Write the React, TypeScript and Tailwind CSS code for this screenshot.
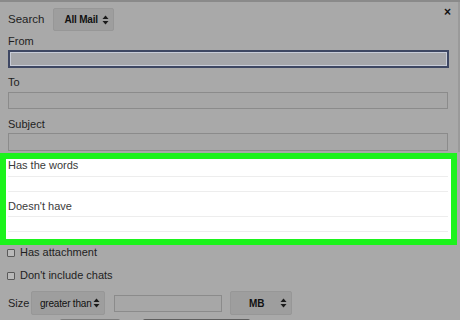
import React from "react";

function UpDown() {
  return (
    <svg width="7" height="10" viewBox="0 0 7 10" className="shrink-0">
      <path d="M3.5 0.5 L6.5 4 L0.5 4 Z" fill="#1a1a1a" />
      <path d="M3.5 9.5 L6.5 6 L0.5 6 Z" fill="#1a1a1a" />
    </svg>
  );
}

function Select({
  label,
  className,
  textClass = "font-bold",
}: {
  label: string;
  className: string;
  textClass?: string;
}) {
  return (
    <div
      className={`flex shrink-0 items-center justify-between rounded-[2px] border border-[#979797] bg-[#9e9e9e] ${className}`}
    >
      <span className={`whitespace-nowrap text-[10px] tracking-[-0.2px] text-[#111] ${textClass}`}>
        {label}
      </span>
      <UpDown />
    </div>
  );
}

export default function App() {
  return (
    <div
      className="relative h-[320px] w-[460px] overflow-hidden border-t-2 border-[#8a8a8a] bg-[#a9a9a9] text-[11px] text-[#1e1e1e]"
      style={{ fontFamily: '"Liberation Sans", Arial, sans-serif' }}
    >
      {/* close */}
      <span className="absolute right-[9px] top-[4px] text-[12px] font-bold leading-none text-[#111]">
        ×
      </span>
      <div className="absolute right-0 top-0 h-[150px] w-[2px] bg-[#9a9a9a]" />

      <div className="flex flex-col pt-[6px]">
        <div className="flex items-center gap-[9px] px-[8px]">
          <span className="text-[11.5px]">Search</span>
          <Select label="All Mail" className="h-[23px] w-[61px] pl-[10px] pr-[4px]" />
        </div>

        <div className="mt-[3px] px-[8px] leading-[14px]">From</div>
        <div className="mx-[8px] mt-[2px] h-[18px] w-[441px] border-2 border-[#3e4763] bg-[#a6a7ab] shadow-[inset_0_0_0_1px_#c8ccd8]" />

        <div className="mt-[7px] px-[8px] leading-[14px]">To</div>
        <div className="mx-[8px] mt-[3px] h-[17px] w-[440px] border border-[#8b8b8b] bg-[#a7a7a7]" />

        <div className="mt-[8px] px-[8px] leading-[14px]">Subject</div>
        <div className="mx-[8px] mt-[2px] h-[18px] w-[440px] border border-[#8b8b8b] bg-[#a7a7a7]" />

        {/* highlighted section */}
        <div className="mt-[2px] h-[92px] w-[457px] border-[6px] border-[#1cf31c] bg-white">
          <div className="px-[2px] leading-[13px] text-[#3a3a3a]">
            Has the words
          </div>
          <div className="ml-[2px] mt-[4px] h-[16px] w-[440px] border-y border-[#ededed]" />
          <div className="mt-[7px] px-[2px] leading-[14px] text-[#3a3a3a]">
            Doesn&apos;t have
          </div>
          <div className="ml-[2px] mt-[3px] h-[16px] w-[440px] border-y border-[#ededed]" />
        </div>

        <div className="mt-[1px] flex items-center gap-[5px] px-[7px]">
          <span className="h-[8px] w-[8px] rounded-[1px] border border-[#5a5a5a] bg-[#b9b9b9]" />
          <span className="leading-[13px]">Has attachment</span>
        </div>
        <div className="mt-[10px] flex items-center gap-[5px] px-[7px]">
          <span className="h-[8px] w-[8px] rounded-[1px] border border-[#5a5a5a] bg-[#b9b9b9]" />
          <span className="leading-[13px]">Don&apos;t include chats</span>
        </div>

        <div className="mt-[9px] flex items-center px-[8px]">
          <span className="w-[23px]">Size</span>
          <Select
            label="greater than"
            textClass="font-normal"
            className="h-[24px] w-[74px] pl-[8px] pr-[4px]"
          />
          <div className="ml-[9px] h-[17px] w-[108px] border border-[#8b8b8b] bg-[#a7a7a7]" />
          <Select label="MB" className="ml-[8px] h-[24px] w-[62px] pl-[18px] pr-[4px]" />
        </div>

        <div className="mt-[4px] flex gap-[23px] pl-[60px]">
          <div className="h-[6px] w-[60px] rounded-t-[2px] border-t border-[#7d7d7d] bg-[#a0a0a0]" />
          <div className="h-[6px] w-[107px] rounded-t-[2px] border-t border-[#5e5e5e] bg-[#a0a0a0]" />
        </div>
      </div>
    </div>
  );
}
